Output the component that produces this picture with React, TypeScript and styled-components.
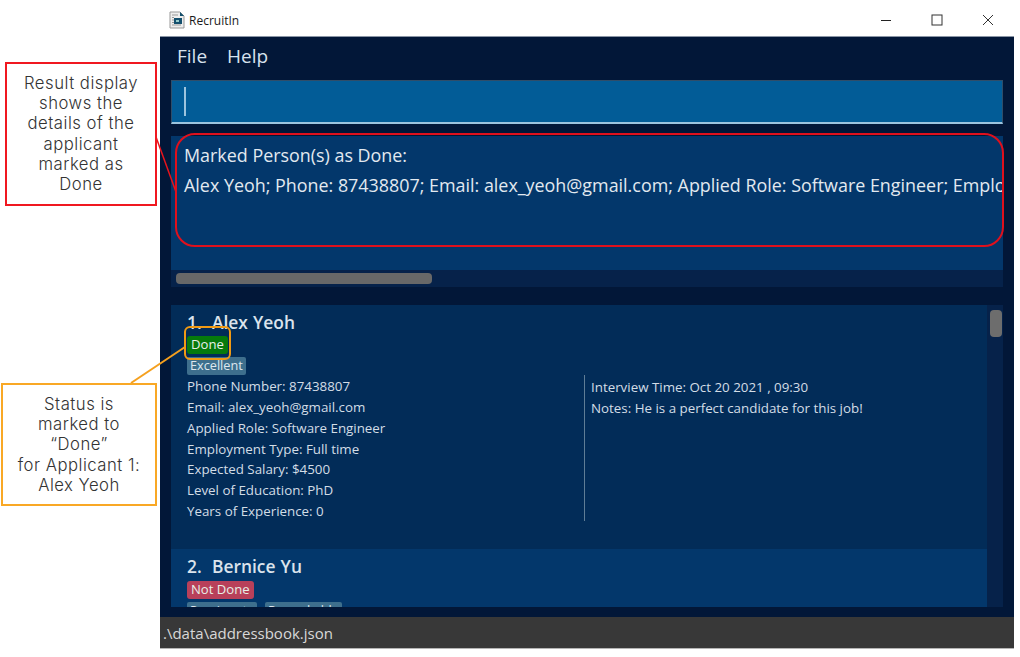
import React from "react";
import styled, { createGlobalStyle } from "styled-components";

const Global = createGlobalStyle`
  html, body { margin: 0; padding: 0; background: #fff; }
  body { width: 1020px; height: 657px; overflow: hidden; font-family: "Open Sans", "Noto Sans", sans-serif; }
`;
const Page = styled.div`
  position: relative; width: 1020px; height: 657px; padding-left: 160px; box-sizing: border-box; background: #fff;
`;
const Window = styled.div`
  width: 854px; height: 648px; display: flex; flex-direction: column; background: #021738;
  border-bottom: 1px solid #b5b5b5; box-sizing: content-box;
`;
const TitleBar = styled.div`
  display: flex; align-items: center; background: #fff; border-bottom: 1px solid #8a95a5; padding: 4px 0 0 9px; box-sizing: content-box; height: 32px; color: #1a1a1a;
  font-size: 12px; flex: none;
`;
const TitleText = styled.span` margin-left: 4px; font-family: "Open Sans", sans-serif; font-size: 12px; `;
const WinButtons = styled.div` margin-left: auto; margin-right: 1px; display: flex; `;
const WinButton = styled.div` width: 51px; height: 32px; display: flex; align-items: center; justify-content: center; `;
const MenuBar = styled.div`
  height: 43px; display: flex; gap: 20px; align-items: center; padding: 0 0 6px 17px; box-sizing: border-box; color: #d8e2ee; font-size: 19px; flex: none;
`;
const Content = styled.div` flex: 1; display: flex; flex-direction: column; padding: 0 11px; min-height: 0; `;
const CommandBox = styled.div`
  height: 44px; box-sizing: border-box; background: #025c97; border: 1px solid #2f4d69; border-bottom: 2px solid #9cc4de; display: flex; align-items: center; padding-left: 12px; flex: none;
`;
const Caret = styled.div` width: 1.5px; height: 29px; background: #9cc4de; `;
const ResultPanel = styled.div`
  margin-top: 12px; height: 151px; flex: none; display: flex; flex-direction: column; background: #06224a;
`;
const ResultText = styled.div`
  height: 134px; background: #03376b; color: #e2e9f0; font-size: 17.9px; line-height: 30px; padding: 4px 0 0 13px; box-sizing: border-box; white-space: nowrap; overflow: hidden; flex: none;
`;
const HTrack = styled.div` flex: 1; padding: 3px 0 0 5px; `;
const HThumb = styled.div` width: 256px; height: 11px; border-radius: 4px; background: #686868; `;
const ListPanel = styled.div`
  margin-top: 18px; height: 302px; flex: none; display: flex; background: #06224a; overflow: hidden;
`;
const List = styled.div` flex: 1; min-width: 0; `;
const Card = styled.div<{ $alt?: boolean }>`
  height: ${(p) => (p.$alt ? "58px" : "244px")}; box-sizing: border-box; overflow: hidden; padding: 5px 0 0 16px;
  background: ${(p) => (p.$alt ? "#03376b" : "#022c58")}; color: #d6dfe9;
`;
const Name = styled.div` font-size: 17.4px; font-weight: 600; line-height: 24px; color: #dbe3ec; white-space: pre; word-spacing: 0.6px; `;
const BadgeRow = styled.div<{ $tight?: boolean }>` display: flex; gap: 8px; margin-top: ${(p) => (p.$tight ? "2px" : "3px")}; height: 18px; `;
const StatusBadge = styled.span<{ $done?: boolean }>`
  background: ${(p) => (p.$done ? "#067a0c" : "#b8405a")}; color: #e8f0e8; font-size: 13.1px; line-height: 17px; height: 18px; padding: 0 4px; border-radius: 3px;
`;
const Tag = styled.span`
  background: #3e6f8d; color: #dde7ee; font-size: 12.7px; line-height: 16px; height: 18px; padding: 0 3px; border-radius: 2px;
`;
const TagRow = styled.div` display: flex; gap: 8px; margin-top: 3px; height: 18px; `;
const Details = styled.div` display: flex; `;
const LeftCol = styled.div` width: 397px; padding-top: 1px; box-sizing: border-box; flex: none; `;
const RightCol = styled.div` border-left: 1px solid #5f7d96; padding: 2px 0 0 6px; height: 146px; box-sizing: border-box; `;
const Detail = styled.div` font-size: 13.35px; line-height: 20.85px; color: #d3dde6; white-space: nowrap; `;
const VTrack = styled.div` width: 16px; flex: none; padding: 5px 1px 0 3px; box-sizing: border-box; `;
const VThumb = styled.div` width: 12px; height: 27px; background: #6d6d6d; border-radius: 4px; `;
const StatusBar = styled.div`
  margin-top: 10px; height: 31px; flex: none; background: #383838; color: #d8d8d8; font-size: 15px; line-height: 33px; padding-left: 3px; box-sizing: border-box;
`;
const StatusBarSpacer = styled.div` flex: 1; `;
const Callout = styled.div<{ $c: string; $l: number; $t: number; $w: number; $h: number }>`
  position: absolute; left: ${(p) => p.$l}px; top: ${(p) => p.$t}px; width: ${(p) => p.$w}px; height: ${(p) => p.$h}px;
  box-sizing: border-box; border: 2px solid ${(p) => p.$c}; background: #fff; color: #333; text-align: center;
  font-family: Inter, "Open Sans", sans-serif; font-weight: 300; font-size: 16.7px; letter-spacing: 0.5px; line-height: 20.2px; padding-top: 9px;
`;
const Highlight = styled.div<{ $c: string; $l: number; $t: number; $w: number; $h: number; $r: number }>`
  position: absolute; left: ${(p) => p.$l}px; top: ${(p) => p.$t}px; width: ${(p) => p.$w}px; height: ${(p) => p.$h}px;
  box-sizing: border-box; border: 2px solid ${(p) => p.$c}; border-radius: ${(p) => p.$r}px;
`;
const Connectors = styled.svg` position: absolute; left: 0; top: 0; pointer-events: none; `;

export default function App() {
  return (
    <Page>
      <Global />
      <Window>
        <TitleBar>
          <svg width="16" height="18" viewBox="0 0 16 18">
            <path d="M1 1h10l4 4v12H1z" fill="#eee" stroke="#999" />
            <path d="M3 4h6M3 6.5h2M3 9h2M3 11.5h2M3 14h9" stroke="#999" />
            <rect x="5" y="7" width="8" height="6" fill="#14506e" />
            <rect x="7" y="9" width="3" height="2" fill="#9cc" />
            <path d="M11 1v4h4z" fill="#14506e" />
          </svg>
          <TitleText>RecruitIn</TitleText>
          <WinButtons>
            <WinButton>
              <svg width="12" height="12" viewBox="0 0 12 12"><path d="M1 6.5h10" stroke="#222" strokeWidth="1" /></svg>
            </WinButton>
            <WinButton>
              <svg width="12" height="12" viewBox="0 0 12 12"><rect x="1" y="1" width="10" height="10" fill="none" stroke="#333" /></svg>
            </WinButton>
            <WinButton>
              <svg width="12" height="12" viewBox="0 0 12 12"><path d="M1 1l10 10M11 1L1 11" stroke="#333" /></svg>
            </WinButton>
          </WinButtons>
        </TitleBar>
        <MenuBar><span>File</span><span>Help</span></MenuBar>
        <Content>
          <CommandBox><Caret /></CommandBox>
          <ResultPanel>
            <ResultText>
              Marked Person(s) as Done:<br />
              Alex Yeoh; Phone: 87438807; Email: alex_yeoh@gmail.com; Applied Role: Software Engineer; Employment Type: Full time
            </ResultText>
            <HTrack><HThumb /></HTrack>
          </ResultPanel>
          <ListPanel>
            <List>
              <Card>
                <Name>1.  Alex Yeoh</Name>
                <BadgeRow $tight><StatusBadge $done>Done</StatusBadge></BadgeRow>
                <TagRow><Tag>Excellent</Tag></TagRow>
                <Details>
                  <LeftCol>
                    <Detail>Phone Number: 87438807</Detail>
                    <Detail>Email: alex_yeoh@gmail.com</Detail>
                    <Detail>Applied Role: Software Engineer</Detail>
                    <Detail>Employment Type: Full time</Detail>
                    <Detail>Expected Salary: $4500</Detail>
                    <Detail>Level of Education: PhD</Detail>
                    <Detail>Years of Experience: 0</Detail>
                  </LeftCol>
                  <RightCol>
                    <Detail>Interview Time: Oct 20 2021 , 09:30</Detail>
                    <Detail>Notes: He is a perfect candidate for this job!</Detail>
                  </RightCol>
                </Details>
              </Card>
              <Card $alt>
                <Name>2.  Bernice Yu</Name>
                <BadgeRow><StatusBadge>Not Done</StatusBadge></BadgeRow>
                <TagRow><Tag>Passionate</Tag><Tag>Remarkable</Tag></TagRow>
              </Card>
            </List>
            <VTrack><VThumb /></VTrack>
          </ListPanel>
          <StatusBarSpacer />
        </Content>
        <StatusBar>.\data\addressbook.json</StatusBar>
      </Window>
      <Connectors width="1020" height="657">
        <path d="M156 137L176 192" stroke="#e8141c" strokeWidth="1.5" fill="none" />
        <path d="M131 383L185 347" stroke="#f5a01e" strokeWidth="2" fill="none" />
      </Connectors>
      <Highlight $c="#e0101c" $l={175} $t={133} $w={829} $h={114} $r={20} />
      <Highlight $c="#f09a14" $l={184} $t={326} $w={47} $h={34} $r={6} />
      <Callout $c="#f01820" $l={5} $t={62} $w={152} $h={144}>
        Result display<br />shows the<br />details of the<br />applicant<br />marked as<br />Done
      </Callout>
      <Callout $c="#f9a825" $l={1} $t={383} $w={156} $h={123}>
        Status is<br />marked to<br />“Done”<br />for Applicant 1:<br />Alex Yeoh
      </Callout>
    </Page>
  );
}
